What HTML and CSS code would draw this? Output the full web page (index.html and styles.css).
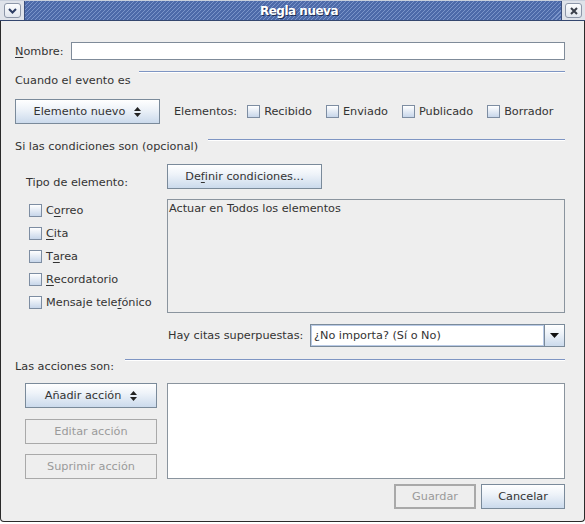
FILE: index.html
```html
<!DOCTYPE html>
<html>
<head>
<meta charset="utf-8">
<title>Regla nueva</title>
<link rel="stylesheet" href="styles.css">
</head>
<body>
<div class="window">
  <div class="titlebar">
    <div class="cap cap-left">
      <div class="tbtn"><svg width="9" height="6" viewBox="0 0 9 6"><polyline points="1,1 4.5,4.5 8,1" fill="none" stroke="#2c3d64" stroke-width="2"/></svg></div>
    </div>
    <div class="stripes"><span class="title">Regla nueva</span></div>
    <div class="cap cap-right">
      <div class="tbtn"><svg width="8" height="8" viewBox="0 0 8 8"><path d="M1 1L7 7M7 1L1 7" stroke="#3a3f4a" stroke-width="2"/></svg></div>
    </div>
  </div>
  <div class="body">
    <div class="name-row">
      <span class="name-lbl"><u>N</u>ombre:</span>
      <div class="input"></div>
    </div>

    <div class="sect s1"><span class="sect-text">Cuando el evento es</span><span class="sect-line"></span></div>

    <div class="event-row">
      <div class="btn btn-elem">Elemento nuevo <svg class="updown" width="7" height="10" viewBox="0 0 7 10"><path d="M3.5 0L7 4H0Z M0 6H7L3.5 10Z" fill="#222"/></svg></div>
      <span class="elems-lbl">Elementos:</span>
      <span class="chk"><span class="box"></span>Recibido</span>
      <span class="chk"><span class="box"></span>Enviado</span>
      <span class="chk"><span class="box"></span>Publicado</span>
      <span class="chk"><span class="box"></span>Borrador</span>
    </div>

    <div class="sect s2"><span class="sect-text">Si las condiciones son (opcional)</span><span class="sect-line"></span></div>

    <div class="cond">
      <div class="cond-left">
        <div class="tipo">Tipo de elemento:</div>
        <div class="chk-list">
          <span class="chk"><span class="box"></span>C<u>o</u>rreo</span>
          <span class="chk"><span class="box"></span><u>C</u>ita</span>
          <span class="chk"><span class="box"></span>T<u>a</u>rea</span>
          <span class="chk"><span class="box"></span><u>R</u>ecordatorio</span>
          <span class="chk"><span class="box"></span>Mensaje tele<u>f</u>ónico</span>
        </div>
      </div>
      <div class="cond-right">
        <div class="btn btn-def">De<u>f</u>inir condiciones...</div>
        <div class="area area-gray">Actuar en Todos los elementos</div>
        <div class="combo-row">
          <span class="combo-lbl">Hay citas superpuestas:</span>
          <div class="combo">
            <div class="combo-field">¿No importa? (Sí o No)</div>
            <div class="combo-btn"><svg width="9" height="5" viewBox="0 0 9 5"><path d="M0 0H9L4.5 5Z" fill="#111"/></svg></div>
          </div>
        </div>
      </div>
    </div>

    <div class="sect s3"><span class="sect-text">Las acciones son:</span><span class="sect-line"></span></div>

    <div class="acts">
      <div class="acts-left">
        <div class="btn btn-act">Añadir acción <svg class="updown" width="7" height="10" viewBox="0 0 7 10"><path d="M3.5 0L7 4H0Z M0 6H7L3.5 10Z" fill="#222"/></svg></div>
        <div class="btn btn-act disabled mt11">Editar acción</div>
        <div class="btn btn-act disabled mt10">Suprimir acción</div>
      </div>
      <div class="area area-white"></div>
    </div>

    <div class="footer">
      <div class="btn btn-save disabled">Guardar</div>
      <div class="btn btn-cancel">Cancelar</div>
    </div>
  </div>
</div>
</body>
</html>
```

FILE: styles.css
```css
html, body {
  margin: 0;
  padding: 0;
  background: #ffffff;
}
body {
  font-family: "DejaVu Sans", "Liberation Sans", sans-serif;
  font-size: 11.25px;
  color: #333333;
}
u {
  text-decoration-thickness: 1px;
  text-underline-offset: 2px;
}
.window {
  width: 585px;
  height: 522px;
  display: flex;
  flex-direction: column;
}

/* title bar */
.titlebar {
  height: 21px;
  box-sizing: border-box;
  display: flex;
  border-top: 1px solid #c9d0dc;
  border-bottom: 1px solid #33466e;
}
.cap {
  width: 25px;
  background: #dfe3ea;
  display: flex;
  justify-content: center;
  padding-top: 2px;
  box-sizing: border-box;
}
.cap-left { border-right: 1px solid #3b4f7c; }
.cap-right { border-left: 1px solid #3b4f7c; width: 24px; }
.tbtn {
  width: 17px;
  height: 15px;
  box-sizing: border-box;
  border: 1px solid #8c96a8;
  border-radius: 3px;
  background: linear-gradient(#fcfdfe, #e1e6ee);
  display: flex;
  align-items: center;
  justify-content: center;
}
.stripes {
  flex: 1;
  background: repeating-linear-gradient(135deg, #7a94c9 0px, #7a94c9 1.2px, #4d6aa9 1.2px, #4d6aa9 2.83px);
  display: flex;
  align-items: center;
  justify-content: center;
}
.title {
  color: #ffffff;
  font-weight: bold;
  font-size: 12px;
  letter-spacing: -0.5px;
  text-shadow: 1px 1px 0 #1f2f55;
  margin-left: 12px;
}

/* body */
.body {
  flex: 1;
  background: #eeeeee;
  border-left: 1px solid #2a2a2a;
  border-right: 1px solid #2a2a2a;
  border-bottom: 1px solid #2a2a2a;
  border-radius: 0 0 4px 4px;
  padding: 0 19px 0 14px;
  display: flex;
  flex-direction: column;
}

.name-row {
  margin-top: 21px;
  height: 18px;
  display: flex;
  align-items: center;
}
.name-lbl { width: 56px; }
.input {
  flex: 1;
  height: 18px;
  box-sizing: border-box;
  border: 1px solid #7f8b99;
  background: #ffffff;
}

.sect {
  display: flex;
  align-items: flex-start;
  height: 16px;
}
.sect-text {
  line-height: 14px;
  white-space: nowrap;
}
.sect-line {
  flex: 1;
  height: 0;
  border-top: 1px solid #7e95c3;
  border-bottom: 1px solid #ffffff;
}
.s1 { margin-top: 11px; height: 17px; }
.s1 .sect-text { margin-top: 3px; }
.s1 .sect-line { margin-left: 8px; }
.s2 { margin-top: 15px; height: 15px; }
.s2 .sect-text { margin-top: 1px; }
.s2 .sect-line { margin-left: 10px; }
.s3 { margin-top: 12px; height: 15px; }
.s3 .sect-text { margin-top: 1px; }
.s3 .sect-line { margin-left: 11px; }

.btn {
  height: 25px;
  box-sizing: border-box;
  border: 1px solid #7a8a9a;
  background: linear-gradient(#ffffff 0%, #eef3f9 40%, #cbdaec 100%);
  display: flex;
  align-items: center;
  justify-content: center;
  white-space: nowrap;
}
.btn.disabled {
  border-color: #a9a9a9;
  background: #eeeeee;
  color: #9a9a9a;
}
.updown { margin-left: 9px; }

.event-row {
  margin-top: 11px;
  height: 25px;
  display: flex;
  align-items: center;
}
.btn-elem { width: 145px; flex: none; }
.elems-lbl { margin-left: 14px; margin-right: 10px; }
.chk {
  display: flex;
  align-items: center;
  white-space: nowrap;
}
.event-row .chk { margin-right: 14px; }
.box {
  width: 13px;
  height: 13px;
  box-sizing: border-box;
  border: 1px solid #7d8da2;
  background: linear-gradient(#ffffff, #c7d6ea);
  margin-right: 4px;
  flex: none;
}

.cond {
  margin-top: 10px;
  display: flex;
}
.cond-left {
  width: 152px;
  flex: none;
}
.tipo {
  margin-top: 12px;
  margin-left: 11px;
  line-height: 14px;
}
.chk-list {
  margin-top: 9px;
  margin-left: 14px;
  display: flex;
  flex-direction: column;
}
.chk-list .chk { height: 23px; }
.cond-right {
  flex: 1;
  display: flex;
  flex-direction: column;
}
.btn-def { width: 155px; height: 25px; }
.area {
  box-sizing: border-box;
  border: 1px solid #8a949e;
}
.area-gray {
  margin-top: 10px;
  height: 114px;
  background: #eeeeee;
  padding: 2px 0 0 1px;
  line-height: 14px;
}
.combo-row {
  margin-top: 11px;
  height: 23px;
  display: flex;
  align-items: center;
}
.combo-lbl { margin-left: 1px; width: 142px; }
.combo {
  flex: 1;
  height: 23px;
  display: flex;
}
.combo-field {
  flex: 1;
  box-sizing: border-box;
  border: 1px solid #7a8a9a;
  box-shadow: inset 0 0 0 1px #b9cae6;
  background: #ffffff;
  padding-left: 3px;
  display: flex;
  align-items: center;
}
.combo-btn {
  width: 20px;
  box-sizing: border-box;
  border: 1px solid #7a8a9a;
  border-left: none;
  background: linear-gradient(#ffffff 0%, #eef3f9 40%, #cbdaec 100%);
  display: flex;
  align-items: center;
  justify-content: center;
}

.acts {
  margin-top: 9px;
  height: 96px;
  display: flex;
}
.acts-left {
  width: 152px;
  flex: none;
  padding-left: 10px;
  box-sizing: border-box;
  display: flex;
  flex-direction: column;
}
.btn-act { width: 132px; }
.mt11 { margin-top: 11px; }
.mt10 { margin-top: 10px; }
.area-white {
  flex: 1;
  background: #ffffff;
}

.footer {
  margin-top: 5px;
  display: flex;
  justify-content: flex-end;
  gap: 5px;
}
.btn-save {
  width: 82px;
  border: 2px solid #a6a6a6;
}
.btn-cancel { width: 84px; }
```
